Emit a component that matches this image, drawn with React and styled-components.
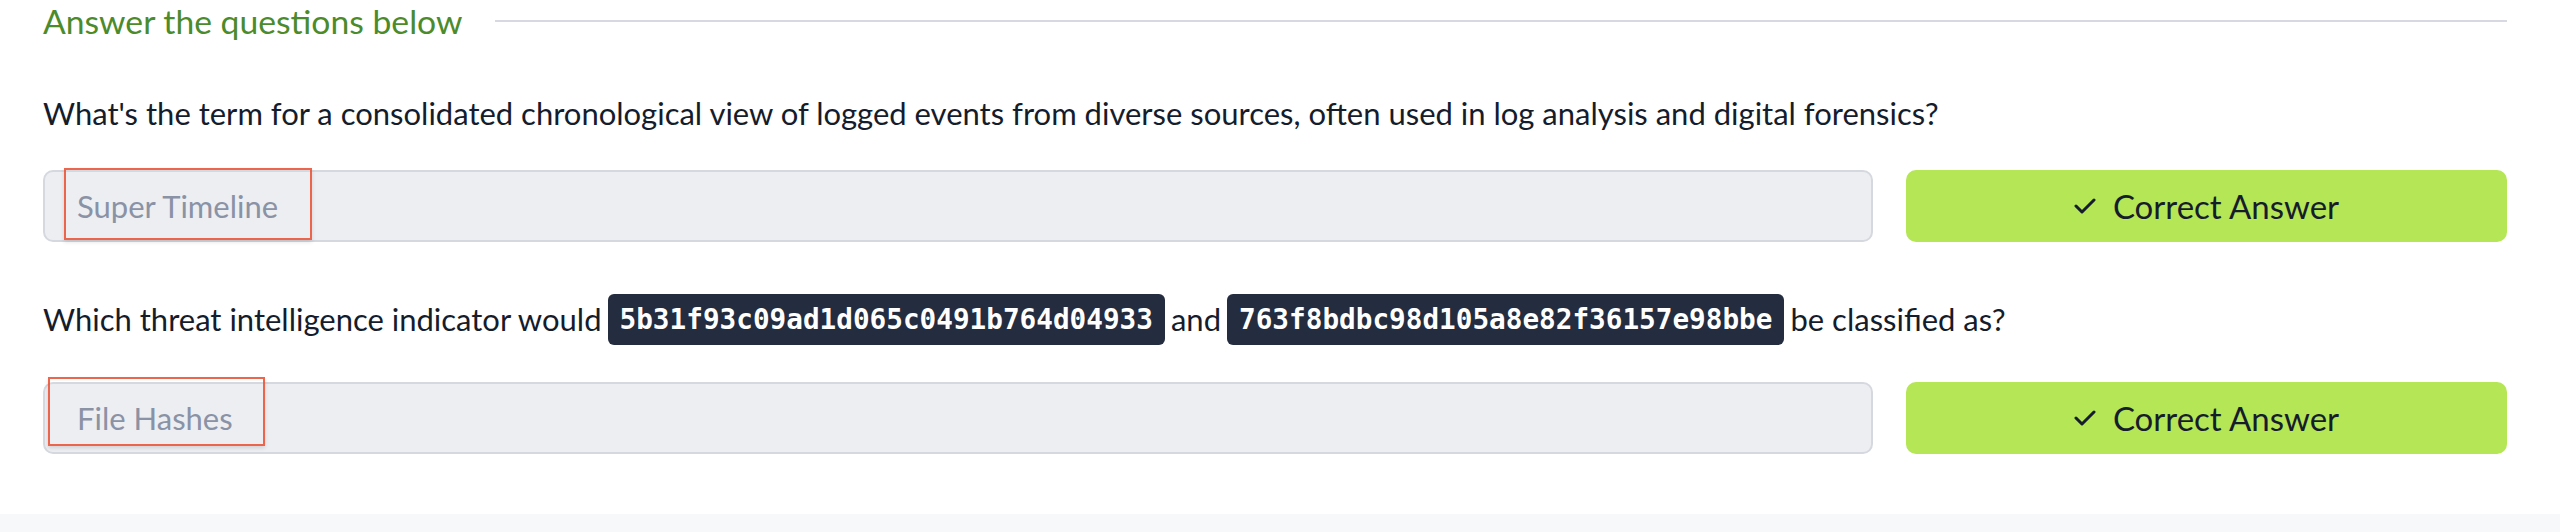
import React from 'react'
import styled, { createGlobalStyle } from 'styled-components'

const GlobalStyle = createGlobalStyle`
    html, body {
        margin:0;
        padding:0;
        background:#ffffff;
    }
    body {
        font-family:Lato, "Open Sans", sans-serif;
        color:#151c2b;
    }
`

const questions = [
    {
        parts: ["What's the term for a consolidated chronological view of logged events from diverse sources, often used in log analysis and digital forensics?"],
        answer: 'Super Timeline',
        mark: { left: 19, top: -4, width: 248, height: 72 },
    },
    {
        parts: [
            'Which threat intelligence indicator would',
            { code: '5b31f93c09ad1d065c0491b764d04933' },
            'and',
            { code: '763f8bdbc98d105a8e82f36157e98bbe' },
            'be classified as?',
        ],
        answer: 'File Hashes',
        mark: { left: 3, top: -7, width: 217, height: 69 },
    },
]

function App() {
    return (
        <>
            <GlobalStyle />
            <Page>
                <Header>
                    <Title>Answer the questions below</Title>
                    <Rule />
                </Header>
                {questions.map((q, i) => {
                    const hasCode = q.parts.some(p => typeof p !== 'string')
                    return (
                        <Question key={i} $first={i === 0}>
                            <Prompt $hasCode={hasCode}>
                                {q.parts.map((p, j) =>
                                    typeof p === 'string'
                                        ? <span key={j}>{p}</span>
                                        : <Code key={j}>{p.code}</Code>
                                )}
                            </Prompt>
                            <AnswerRow>
                                <Field>
                                    <FieldText>{q.answer}</FieldText>
                                    {/* reviewer's highlight drawn over the field */}
                                    <Highlight style={q.mark} />
                                </Field>
                                <CorrectButton>
                                    <svg width="22" height="18" viewBox="0 0 22 18">
                                        <polyline points="2,9 8,15 20,3" fill="none" stroke="#151c2b" strokeWidth="3" strokeLinecap="round" strokeLinejoin="round" />
                                    </svg>
                                    <span>Correct Answer</span>
                                </CorrectButton>
                            </AnswerRow>
                        </Question>
                    )
                })}
            </Page>
            <Footer />
        </>
    )
}

export default App

const Page = styled.div`
    padding:0 53px 60px 43px;
`
const Header = styled.div`
    display:flex;
    align-items:center;
    height:42px;
    gap:33px;
`
const Title = styled.h2`
    margin:0;
    font-size:33.7px;
    font-weight:400;
    color:#4b8b2b;
    white-space:nowrap;
`
const Rule = styled.div`
    flex:1;
    height:2px;
    background:#d6d9e1;
`
const Question = styled.div`
    margin-top:${p => p.$first ? '46px' : '52px'};
`
const Prompt = styled.p`
    margin:0 0 ${p => p.$hasCode ? '37px' : '31px'};
    font-size:31px;
    line-height:51px;
    color:#151c2b;
    display:flex;
    align-items:center;
    gap:6px;
    white-space:nowrap;
`
const Code = styled.code`
    display:inline-block;
    background:#242c40;
    color:#ffffff;
    font-family:"DejaVu Sans Mono", monospace;
    font-weight:700;
    font-size:27.7px;
    line-height:51px;
    padding:0 12px;
    border-radius:6px;
`
const AnswerRow = styled.div`
    display:grid;
    grid-template-columns:1fr 601px;
    gap:33px;
`
const Field = styled.div`
    position:relative;
    height:72px;
    box-sizing:border-box;
    border:2px solid #d5d8df;
    border-radius:10px;
    background:#edeef2;
    display:flex;
    align-items:center;
    padding-left:32px;
`
const FieldText = styled.span`
    font-size:31px;
    color:#8a92a5;
`
const Highlight = styled.div`
    position:absolute;
    box-sizing:border-box;
    border:2px solid rgba(234,85,58,0.9);
    box-shadow:0 2px 4px rgba(0,0,0,0.12);
`
const CorrectButton = styled.button`
    height:72px;
    border:none;
    border-radius:10px;
    background:#b5e655;
    display:flex;
    align-items:center;
    justify-content:center;
    gap:17px;
    font-family:Lato, sans-serif;
    font-size:33px;
    color:#151c2b;
    cursor:pointer;
`
const Footer = styled.div`
    height:18px;
    background:#f7f8fa;
`
